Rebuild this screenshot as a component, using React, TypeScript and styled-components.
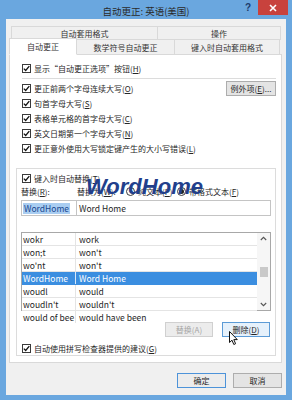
import React from "react";
import styled, { createGlobalStyle, css } from "styled-components";

const GlobalStyle = createGlobalStyle`
  html, body { margin: 0; padding: 0; background: #6aa7df; }
  body { font-family: "Noto Sans CJK SC", "Noto Sans", sans-serif; color: #262626; }
  * { box-sizing: border-box; }
  u { text-decoration-thickness: 1px; text-underline-offset: 1px; }
`;

const Window = styled.div`
  width: 292px;
  height: 400px;
  background: #6aa7df;
  display: flex;
  flex-direction: column;
  overflow: hidden;
`;

const TitleBar = styled.div`
  height: 19px;
  flex: none;
  display: grid;
  grid-template-columns: 1fr auto 1fr;
`;

const TitleText = styled.div`
  grid-column: 2;
  padding-top: 5px;
  font-size: 9.5px;
  line-height: 12px;
  color: #2a2a2a;
  white-space: nowrap;
`;

const TitleControls = styled.div`
  grid-column: 3;
  display: flex;
  justify-content: flex-end;
  align-items: flex-start;
  padding-right: 4px;
`;

const HelpMark = styled.span`
  font-family: "Liberation Sans", sans-serif;
  font-weight: bold;
  font-size: 10px;
  line-height: 12px;
  color: #1c3b6b;
  margin-top: 2px;
  margin-right: 7px;
`;

const CloseButton = styled.div`
  width: 30px;
  height: 15px;
  background: #c8423d;
  display: flex;
  align-items: center;
  justify-content: center;
`;

const Body = styled.div`
  flex: 1;
  margin: 0 6px 5px;
  background: #f0f0f0;
  padding: 7px 4px 0 3px;
  display: flex;
  flex-direction: column;
`;

const TabRow = styled.div<{ $inset: number; $h: number; $overlap?: boolean }>`
  display: flex;
  height: ${(p) => p.$h}px;
  margin-left: ${(p) => p.$inset}px;
  margin-right: 2px;
  ${(p) => p.$overlap && css`margin-top: -1px;`}
`;

const Tab = styled.div<{ $w: number; $active?: boolean }>`
  width: ${(p) => p.$w}px;
  flex: none;
  border: 1px solid #d9d9d9;
  margin-left: -1px;
  &:first-child { margin-left: 0; }
  background: #f0f0f0;
  font-size: 8px;
  color: #333;
  display: flex;
  align-items: center;
  justify-content: center;
  white-space: nowrap;
  ${(p) =>
    p.$active &&
    css`
      background: #fff;
      position: relative;
      z-index: 2;
      margin-top: -1px;
      border-bottom-color: #fff;
    `}
`;

const Panel = styled.div`
  position: relative;
  z-index: 1;
  margin-top: -1px;
  height: 309px;
  background: #fff;
  border: 1px solid #d9d9d9;
  padding: 6px 5px 0 6px;
  display: flex;
  flex-direction: column;
`;

const CheckRow = styled.div<{ $h?: number; $pad?: number; $between?: boolean; $top?: number }>`
  display: flex;
  align-items: center;
  height: ${(p) => p.$h ?? 15}px;
  padding-left: ${(p) => p.$pad ?? 6}px;
  margin-top: ${(p) => p.$top ?? 0}px;
  font-size: 8px;
  white-space: nowrap;
  ${(p) => p.$between && css`justify-content: space-between;`}
`;

const CheckLabel = styled.label`
  display: flex;
  align-items: center;
  gap: 3px;
  color: #262626;
`;

const CheckBox = styled.span`
  width: 9px;
  height: 9px;
  border: 1px solid #3a3a3a;
  background: #fff;
  display: inline-flex;
  align-items: center;
  justify-content: center;
  flex: none;
`;

const Separator = styled.div`
  height: 1px;
  margin: 2px 0 2px 6px;
  background: #dcdcdc;
`;

type Tone = "plain" | "disabled" | "focus" | "default";

const PushButton = styled.div<{ $w: number; $tone?: Tone }>`
  width: ${(p) => p.$w}px;
  height: 15px;
  flex: none;
  display: flex;
  align-items: center;
  justify-content: center;
  font-size: 8px;
  white-space: nowrap;
  border: 1px solid #adadad;
  background: #e4e4e4;
  color: #262626;
  ${(p) =>
    p.$tone === "disabled" &&
    css`
      color: #a6a6a6;
      border-color: #d0d0d0;
      background: #ececec;
    `}
  ${(p) =>
    p.$tone === "focus" &&
    css`
      border-color: #5c9bd6;
      background: #e6f1fb;
    `}
  ${(p) =>
    p.$tone === "default" &&
    css`
      border-color: #4d93d9;
      background: #ececec;
    `}
`;

const GroupFrame = styled.div`
  position: relative;
  margin-top: 12px;
  height: 188px;
  border: 1px solid #dcdcdc;
  padding: 2px 4px 0 4px;
  display: flex;
  flex-direction: column;
`;

const FieldLabels = styled.div`
  height: 12px;
  display: flex;
  align-items: center;
  font-size: 8px;
  white-space: nowrap;
  color: #262626;
`;

const FieldLabel = styled.span<{ $w: number }>`
  width: ${(p) => p.$w}px;
  flex: none;
`;

const RadioOption = styled.span<{ $w: number }>`
  width: ${(p) => p.$w}px;
  flex: none;
  display: flex;
  align-items: center;
  gap: 3px;
`;

const RadioDot = styled.span<{ $on?: boolean }>`
  width: 9px;
  height: 9px;
  flex: none;
  border-radius: 50%;
  border: 1px solid #3a3a3a;
  background: #fff;
  display: inline-flex;
  align-items: center;
  justify-content: center;
  &::after {
    content: "";
    width: 5px;
    height: 5px;
    border-radius: 50%;
    background: ${(p) => (p.$on ? "#222" : "transparent")};
  }
`;

const TextBoxes = styled.div`
  margin-top: 3px;
  height: 16px;
  display: grid;
  grid-template-columns: 55px 1fr;
  border: 1px solid #c4c4c4;
  background: #fff;
`;

const TextCell = styled.div<{ $first?: boolean }>`
  display: flex;
  align-items: center;
  padding-left: ${(p) => (p.$first ? 1 : 2)}px;
  font-size: 8.5px;
  color: #262626;
  white-space: nowrap;
  overflow: hidden;
  ${(p) => p.$first && css`border-right: 1px solid #c4c4c4;`}
`;

const Selection = styled.span`
  background: #a9cdf1;
  color: #17468f;
  padding: 0 1px;
  line-height: 11px;
`;

const ListBox = styled.div`
  margin-top: 16px;
  height: 79px;
  border: 1px solid #a8a8a8;
  background: #fff;
  display: flex;
`;

const ListRows = styled.div`
  flex: 1;
  display: grid;
  grid-template-rows: repeat(7, 1fr);
`;

const ListRow = styled.div<{ $selected?: boolean }>`
  display: grid;
  grid-template-columns: 54px 1fr;
  border-bottom: 1px solid #e4e4e4;
  &:last-child { border-bottom: none; }
  font-size: 8.5px;
  color: #262626;
  ${(p) =>
    p.$selected &&
    css`
      background: #3b8ee0;
      color: #fff;
      border-bottom-color: #3b8ee0;
    `}
`;

const ListCell = styled.div<{ $first?: boolean; $selected?: boolean }>`
  display: flex;
  align-items: center;
  padding-left: ${(p) => (p.$first ? 1 : 3)}px;
  white-space: nowrap;
  overflow: hidden;
  ${(p) => p.$first && css`border-right: 1px solid ${p.$selected ? "#d7e8f9" : "#e4e4e4"};`}
`;

const ScrollBar = styled.div`
  width: 13px;
  flex: none;
  background: #f6f6f6;
  display: flex;
  flex-direction: column;
`;

const ScrollArrow = styled.div`
  height: 11px;
  display: flex;
  align-items: center;
  justify-content: center;
`;

const ScrollTrack = styled.div`
  flex: 1;
  display: flex;
  flex-direction: column;
  align-items: center;
`;

const ScrollThumb = styled.div`
  margin-top: 23px;
  width: 8px;
  height: 10px;
  background: #c9c9c9;
`;

const ActionRow = styled.div`
  margin-top: 11px;
  height: 15px;
  display: flex;
  justify-content: flex-end;
  gap: 9px;
  padding-right: 1px;
`;

const Watermark = styled.div`
  position: absolute;
  left: 69px;
  top: 7px;
  font-family: "Liberation Sans", sans-serif;
  font-weight: bold;
  font-style: italic;
  font-size: 22px;
  line-height: 22px;
  color: #223f8c;
  pointer-events: none;
  z-index: 3;
`;

const Pointer = styled.svg`
  position: absolute;
  left: 212px;
  top: 162px;
  z-index: 4;
`;

const DialogButtons = styled.div`
  margin-top: 10px;
  display: flex;
  justify-content: flex-end;
  gap: 7px;
`;

const Check = () => (
  <svg width="7" height="7" viewBox="0 0 7 7">
    <path d="M0.8 3.6 L2.7 5.5 L6.3 1.2" fill="none" stroke="#111" strokeWidth="1.3" />
  </svg>
);

const Checked: React.FC<{ children: React.ReactNode }> = ({ children }) => (
  <CheckLabel>
    <CheckBox>
      <Check />
    </CheckBox>
    <span>{children}</span>
  </CheckLabel>
);

const rows: [string, string][] = [
  ["wokr", "work"],
  ["won;t", "won't"],
  ["wo'nt", "won't"],
  ["WordHome", "Word Home"],
  ["woudl", "would"],
  ["woudln't", "wouldn't"],
  ["would of bee", "would have been"],
];

export default function App() {
  return (
    <>
      <GlobalStyle />
      <Window>
        <TitleBar>
          <TitleText>自动更正: 英语(美国)</TitleText>
          <TitleControls>
            <HelpMark>?</HelpMark>
            <CloseButton>
              <svg width="8" height="8" viewBox="0 0 8 8">
                <path d="M1 1 L7 7 M7 1 L1 7" stroke="#fff" strokeWidth="1.6" />
              </svg>
            </CloseButton>
          </TitleControls>
        </TitleBar>
        <Body>
          <TabRow $inset={2} $h={14}>
            <Tab $w={147}>自动套用格式</Tab>
            <Tab $w={124}>操作</Tab>
          </TabRow>
          <TabRow $inset={0} $h={16} $overlap>
            <Tab $w={68} $active>自动更正</Tab>
            <Tab $w={99}>数学符号自动更正</Tab>
            <Tab $w={106}>键入时自动套用格式</Tab>
          </TabRow>
          <Panel>
            <CheckRow>
              <Checked>
                显示“自动更正选项”按钮(<u>H</u>)
              </Checked>
            </CheckRow>
            <Separator />
            <CheckRow $between>
              <Checked>
                更正前两个字母连续大写(<u>O</u>)
              </Checked>
              <PushButton $w={50}>
                <span>
                  例外项(<u>E</u>)...
                </span>
              </PushButton>
            </CheckRow>
            <CheckRow>
              <Checked>
                句首字母大写(<u>S</u>)
              </Checked>
            </CheckRow>
            <CheckRow>
              <Checked>
                表格单元格的首字母大写(<u>C</u>)
              </Checked>
            </CheckRow>
            <CheckRow>
              <Checked>
                英文日期第一个字母大写(<u>N</u>)
              </Checked>
            </CheckRow>
            <CheckRow>
              <Checked>
                更正意外使用大写锁定键产生的大小写错误(<u>L</u>)
              </Checked>
            </CheckRow>

            <GroupFrame>
              <CheckRow $h={14} $pad={1}>
                <Checked>
                  键入时自动替换(<u>T</u>)
                </Checked>
              </CheckRow>
              <FieldLabels>
                <FieldLabel $w={56}>
                  替换(<u>R</u>):
                </FieldLabel>
                <FieldLabel $w={49}>
                  替换为(<u>W</u>):
                </FieldLabel>
                <RadioOption $w={51}>
                  <RadioDot />
                  <span>
                    纯文本(<u>P</u>)
                  </span>
                </RadioOption>
                <RadioOption $w={60}>
                  <RadioDot $on />
                  <span>
                    带格式文本(<u>F</u>)
                  </span>
                </RadioOption>
              </FieldLabels>
              <TextBoxes>
                <TextCell $first>
                  <Selection>WordHome</Selection>
                </TextCell>
                <TextCell>Word Home</TextCell>
              </TextBoxes>
              <ListBox>
                <ListRows>
                  {rows.map(([a, b]) => {
                    const sel = a === "WordHome";
                    return (
                      <ListRow key={a} $selected={sel}>
                        <ListCell $first $selected={sel}>
                          {a}
                        </ListCell>
                        <ListCell>{b}</ListCell>
                      </ListRow>
                    );
                  })}
                </ListRows>
                <ScrollBar>
                  <ScrollArrow>
                    <svg width="7" height="5" viewBox="0 0 7 5">
                      <path d="M0.8 4 L3.5 1.3 L6.2 4" fill="none" stroke="#555" strokeWidth="1.1" />
                    </svg>
                  </ScrollArrow>
                  <ScrollTrack>
                    <ScrollThumb />
                  </ScrollTrack>
                  <ScrollArrow>
                    <svg width="7" height="5" viewBox="0 0 7 5">
                      <path d="M0.8 1 L3.5 3.7 L6.2 1" fill="none" stroke="#555" strokeWidth="1.1" />
                    </svg>
                  </ScrollArrow>
                </ScrollBar>
              </ListBox>
              <ActionRow>
                <PushButton $w={48} $tone="disabled">
                  替换(A)
                </PushButton>
                <PushButton $w={48} $tone="focus">
                  <span>
                    删除(<u>D</u>)
                  </span>
                </PushButton>
              </ActionRow>
              <CheckRow $h={14} $pad={1} $top={4}>
                <Checked>
                  自动使用拼写检查器提供的建议(<u>G</u>)
                </Checked>
              </CheckRow>
              <Watermark>WordHome</Watermark>
              <Pointer width="10" height="15" viewBox="0 0 10 15">
                <path
                  d="M0.5 0.5 L0.5 11.5 L3 9.2 L4.8 13.5 L6.6 12.7 L4.8 8.6 L8.3 8.6 Z"
                  fill="#fff"
                  stroke="#111"
                  strokeWidth="1"
                  strokeLinejoin="round"
                />
              </Pointer>
            </GroupFrame>
          </Panel>
          <DialogButtons>
            <PushButton $w={49} $tone="default">
              确定
            </PushButton>
            <PushButton $w={49}>取消</PushButton>
          </DialogButtons>
        </Body>
      </Window>
    </>
  );
}
